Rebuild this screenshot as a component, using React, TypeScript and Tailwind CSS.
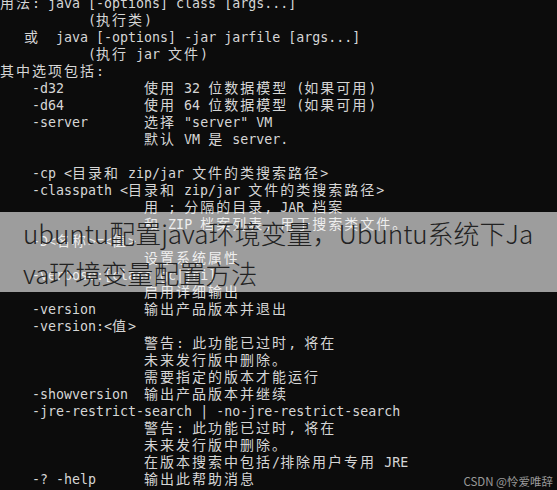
const LINES = [
  "用法: java [-options] class [args...]",
  "           (执行类)",
  "   或  java [-options] -jar jarfile [args...]",
  "           (执行 jar 文件)",
  "其中选项包括:",
  "    -d32          使用 32 位数据模型 (如果可用)",
  "    -d64          使用 64 位数据模型 (如果可用)",
  '    -server       选择 "server" VM',
  "                  默认 VM 是 server.",
  "",
  "    -cp <目录和 zip/jar 文件的类搜索路径>",
  "    -classpath <目录和 zip/jar 文件的类搜索路径>",
  "                  用 ; 分隔的目录, JAR 档案",
  "                  和 ZIP 档案列表, 用于搜索类文件。",
  "    -D<名称>=<值>",
  "                  设置系统属性",
  "    -verbose:[class|gc|jni]",
  "                  启用详细输出",
  "    -version      输出产品版本并退出",
  "    -version:<值>",
  "                  警告: 此功能已过时, 将在",
  "                  未来发行版中删除。",
  "                  需要指定的版本才能运行",
  "    -showversion  输出产品版本并继续",
  "    -jre-restrict-search | -no-jre-restrict-search",
  "                  警告: 此功能已过时, 将在",
  "                  未来发行版中删除。",
  "                  在版本搜索中包括/排除用户专用 JRE",
  "    -? -help      输出此帮助消息",
];

// console cells: ascii = 1 col (8px), cjk = 2 cols (16px)
function ConsoleLine({ text }: { text: string }) {
  const runs = text.split(/([\u3000-\u9fff\uff00-\uffef]+)/).filter(Boolean);
  return (
    <div className="h-[17px] whitespace-pre leading-[17px]">
      {runs.map((run, i) =>
        /[\u3000-\u9fff\uff00-\uffef]/.test(run) ? (
          <span
            key={i}
            className="font-['Noto_Sans_CJK_SC',sans-serif] text-[14px] tracking-[2px]"
          >
            {run}
          </span>
        ) : (
          <span key={i} className="font-['DejaVu_Sans_Mono',monospace] text-[13.3px]">
            {run}
          </span>
        )
      )}
    </div>
  );
}

export default function App() {
  return (
    <div className="relative h-[490px] w-[557px] overflow-hidden bg-[#0c0c0c] text-[#d6d6d6]">
      <div className="-mt-[6px]">
        {LINES.map((line, i) => (
          <ConsoleLine key={i} text={line} />
        ))}
      </div>

      <div className="absolute left-0 right-0 top-[212px] h-[80px] bg-white/60">
        <h1 className="whitespace-nowrap pl-[23px] pt-px font-['Noto_Sans_CJK_SC',sans-serif] text-[26px] font-light leading-[40px] text-[#222]">
          ubuntu配置java环境变量，Ubuntu系统下Ja
          <br />
          va环境变量配置方法
        </h1>
      </div>

      <div className="absolute bottom-0 right-[4px] font-['Noto_Sans_CJK_SC',sans-serif] text-[11.5px] text-[#9a9a9a]">
        CSDN @怜爱唯辞
      </div>
    </div>
  );
}
